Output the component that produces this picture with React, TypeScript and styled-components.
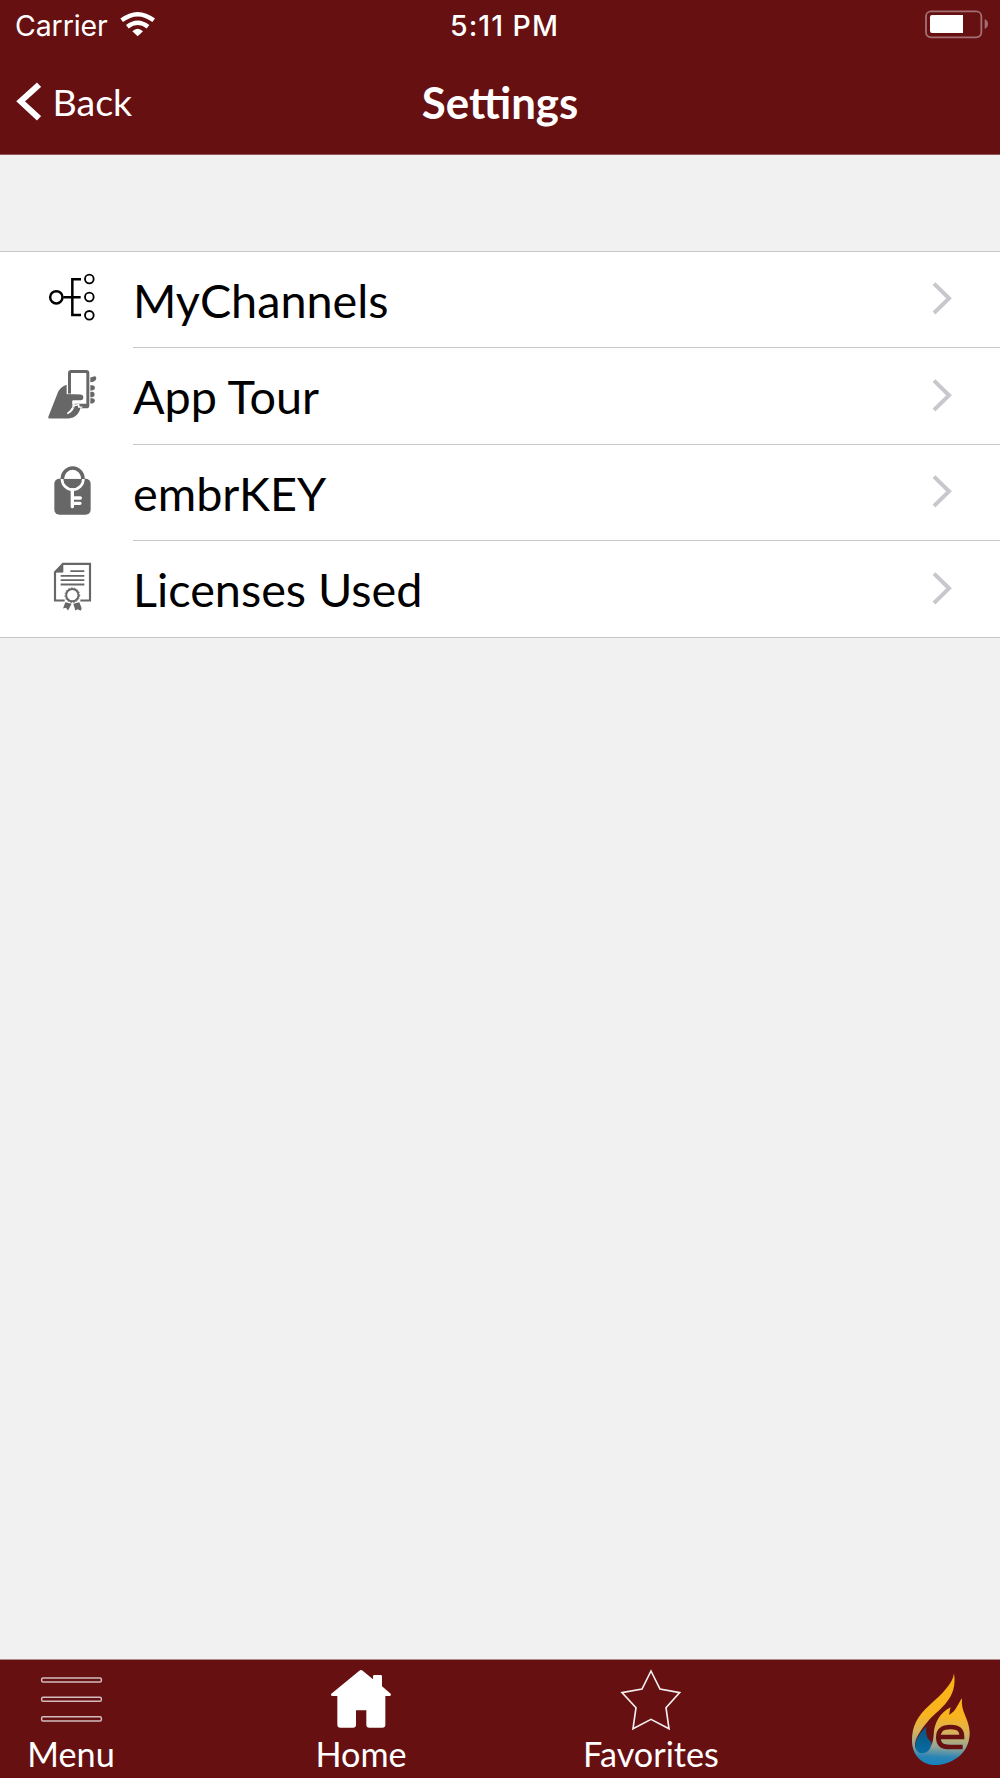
import React from 'react';
import styled, { createGlobalStyle } from 'styled-components';

const maroon = '#661012';
const grey = '#676767';

const GlobalStyle = createGlobalStyle`
  * { box-sizing: border-box; }
  body { margin: 0; background: #f1f1f1; }
`;

const Screen = styled.div`
  width: 1000px;
  height: 1778px;
  display: flex;
  flex-direction: column;
  background: #f1f1f1;
  font-family: Lato, sans-serif;
  color: #000;
  overflow: hidden;
`;

const Header = styled.header`
  height: 155px;
  flex: none;
  background: ${maroon};
  border-bottom: 1px solid #94565a;
  color: #fff;
`;

const StatusBar = styled.div`
  height: 50px;
  display: grid;
  grid-template-columns: 1fr auto 1fr;
  align-items: start;
  padding: 0 12px 0 15px;
  font-family: Inter, sans-serif;
  font-size: 28.5px;
  line-height: 52px;
`;

const Carrier = styled.div`
  display: flex;
  align-items: flex-start;
  gap: 12.5px;
  letter-spacing: -0.1px;
`;

const Clock = styled.time`
  font-weight: 500;
  font-size: 28.5px;
  letter-spacing: 1px;
  padding-left: 6px;
`;

const Battery = styled.svg`
  justify-self: end;
  width: 64px;
  height: 50px;
`;

const Wifi = styled.svg`
  width: 36px;
  height: 50px;
`;

const NavBar = styled.nav`
  height: 104px;
  display: grid;
  grid-template-columns: 1fr auto 1fr;
  padding: 0 16px;
`;

const Back = styled.a`
  display: flex;
  align-items: flex-start;
  gap: 11.5px;
  font-size: 37.6px;
  line-height: 46px;
  padding-top: 29px;
`;

const BackArrow = styled.svg`
  width: 25px;
  height: 40px;
  margin-top: 2px;
`;

const Title = styled.h1`
  margin: 0;
  padding-top: 26px;
  font-size: 43.8px;
  line-height: 52px;
  font-weight: 700;
`;

const List = styled.ul`
  list-style: none;
  margin: 96px 0 0;
  padding: 0;
  flex: none;
  background: #fff;
  border-top: 1px solid #c8c8c8;
  border-bottom: 1px solid #c8c8c8;
`;

const Item = styled.li`
  display: flex;
  align-items: center;
  height: 96px;
  padding-left: 46px;
  &:nth-child(2) { height: 97px; }
`;

const ItemIcon = styled.svg`
  width: 52px;
  height: 52px;
  margin: 0 35px 4px 0;
  flex: none;
`;

const ItemBody = styled.div`
  flex: 1;
  height: 100%;
  display: flex;
  align-items: center;
  justify-content: space-between;
  padding-right: 44px;
  border-bottom: 1px solid #c8c7cc;
  ${Item}:last-child & { border-bottom: 0; }
`;

const ItemLabel = styled.span`
  font-size: 46.75px;
  line-height: 56px;
  white-space: nowrap;
`;

const Chevron = styled.svg`
  width: 24px;
  height: 36px;
  margin-bottom: 3px;
`;

const TabBar = styled.footer`
  height: 119px;
  flex: none;
  margin-top: auto;
  display: flex;
  justify-content: space-between;
  background: ${maroon};
  border-top: 1px solid #b08a8b;
  color: #fff;
`;

const Tabs = styled.div`
  display: flex;
  gap: 150px;
  padding: 6px 0 0 1px;
`;

const Tab = styled.div`
  width: 140px;
  display: flex;
  flex-direction: column;
  align-items: center;
`;

const TabIcon = styled.svg`
  width: 70px;
  height: 66px;
  flex: none;
`;

const TabLabel = styled.span`
  margin-top: 2px;
  font-size: 34.2px;
  line-height: 40px;
`;

const Logo = styled.svg`
  width: 110px;
  height: 118px;
`;

const ChannelsIcon = () => (
  <ItemIcon viewBox="48 66 156 156" fill="none" stroke="#000">
    <circle cx="79" cy="142" r="18.5" strokeWidth="7.5" />
    <path d="M100 142H152M153 88H127V195H153" strokeWidth="7.5" />
    <g strokeWidth="5.5">
      <circle cx="178" cy="87" r="13" />
      <circle cx="178" cy="141" r="13" />
      <circle cx="178" cy="196" r="13" />
    </g>
  </ItemIcon>
);

const TourIcon = () => (
  <ItemIcon viewBox="48 55.5 156 156" fill={grey}>
    <rect x="118.5" y="63" width="55" height="106" rx="5" fill="#fff" stroke={grey} strokeWidth="9" />
    <path d="M134 160H174V168Q174 172 169 172H134Z" />
    <path d="M110 103C95 108 87 117 82 130L55 199Q53 204 58 204H116C136 202 146 191 151 174L147 165L136 164C131 176 126 185 115 190L112 186C119 181 126 174 127 163L126 149H152Q160 149 160 141Q160 132 151 132L134 131H110Z" stroke="#fff" strokeWidth="3" paintOrder="stroke" />
    <path d="M181 81L194 77Q201 78 198 86Q195 94 181 95ZM181 104H187Q195 105 195 112Q195 119 187 120H181ZM181 124H187Q194 125 194 132Q194 139 187 140H181ZM181 143H187Q195 144 195 151Q194 158 187 159H181Z" />
    <path d="M110 130L127 149V163C126 174 119 181 112 187Z" />
    <path d="M112 190L122 181Q129 175 130 166L146 162V170H157M129 152V160" fill="none" stroke="#fff" strokeWidth="4" />
  </ItemIcon>
);

const KeyIcon = () => (
  <ItemIcon viewBox="48 45 156 156">
    <rect x="73" y="86" width="109" height="108" rx="15" fill={grey} />
    <path d="M97 87A31 33 0 0 1 159 87" fill="none" stroke={grey} strokeWidth="11" />
    <path d="M96 87A32 32 0 0 0 160 87" fill="none" stroke="#fff" strokeWidth="8" />
    <path d="M103 86A25 25 0 0 1 153 86Z" fill="#fff" />
    <path d="M127 119V170M127 144H151M127 160H150" fill="none" stroke="#fff" strokeWidth="10" strokeLinecap="round" />
  </ItemIcon>
);

const LicenseIcon = () => (
  <ItemIcon viewBox="48 48.5 156 156" fill="none" stroke={grey}>
    <path d="M104 167H75V82L99 57H180V167H151" strokeWidth="6.5" />
    <path d="M75 82L99 57V82Z" fill={grey} strokeWidth="2" />
    <path d="M121 79H163M92 93H163M92 106H163M92 119H163" strokeWidth="5.5" />
    <circle cx="127" cy="151" r="24" fill="#fff" stroke="none" />
    <circle cx="127" cy="151" r="18.5" strokeWidth="6" />
    <circle cx="127" cy="151" r="22" strokeWidth="3" strokeDasharray="4.5 4.5" />
    <path d="M106 172L99 191L108 189L114 197L125 177ZM148 172L155 190L152 198L143 193L136 197L130 177Z" fill={grey} stroke="none" />
  </ItemIcon>
);

const items = [
  { label: 'MyChannels', Icon: ChannelsIcon },
  { label: 'App Tour', Icon: TourIcon },
  { label: 'embrKEY', Icon: KeyIcon },
  { label: 'Licenses Used', Icon: LicenseIcon },
];

export default function App() {
  return (
    <Screen>
      <GlobalStyle />
      <Header>
        <StatusBar>
          <Carrier>
            Carrier
            <Wifi viewBox="360 0 108 150" fill="none" stroke="#fff">
              <path d="M365 61Q413 24 461 61M382 80Q413 56 444 80" strokeWidth="13" />
              <path d="M397 94Q413 79 429 94L413 109Z" fill="#fff" stroke="none" />
            </Wifi>
          </Carrier>
          <Clock>5:11 PM</Clock>
          <Battery viewBox="72 0 192 150">
            <rect x="78" y="34" width="166" height="78" rx="15" fill="none" stroke="#a36f71" strokeWidth="5.5" />
            <path d="M96 45H189V99H96Q90 99 90 92V52Q90 45 96 45Z" fill="#fff" />
            <path d="M254 57Q264 62 264 72Q264 82 254 87Z" fill="#a36f71" />
          </Battery>
        </StatusBar>
        <NavBar>
          <Back>
            <BackArrow viewBox="48 243 75 120">
              <path d="M117 254L62 304L117 355" fill="none" stroke="#fff" strokeWidth="18" />
            </BackArrow>
            Back
          </Back>
          <Title>Settings</Title>
        </NavBar>
      </Header>
      <List>
        {items.map(({ label, Icon }) => (
          <Item key={label}>
            <Icon />
            <ItemBody>
              <ItemLabel>{label}</ItemLabel>
              <Chevron viewBox="96 120 72 108">
                <path d="M102 131L147 175L102 219" fill="none" stroke="#c7c7cc" strokeWidth="12" />
              </Chevron>
            </ItemBody>
          </Item>
        ))}
      </List>
      <TabBar>
        <Tabs>
          <Tab>
            <TabIcon viewBox="108 48 210 198" fill="none" stroke="#d3bdbe" strokeWidth="4.5">
              <rect x="125" y="84" width="179" height="12" rx="4" />
              <rect x="125" y="142" width="179" height="12" rx="4" />
              <rect x="125" y="200" width="179" height="13" rx="4" />
            </TabIcon>
            <TabLabel>Menu</TabLabel>
          </Tab>
          <Tab>
            <TabIcon viewBox="978 48 210 198" fill="#fff">
              <path d="M1078 62Q1083 58 1088 62L1119 88V79Q1119 75 1123 75H1142Q1146 75 1146 79V109L1172 131Q1175 137 1168 138H1156V224Q1156 233 1147 233H1108Q1099 233 1099 224V181H1068V224Q1068 233 1059 233H1021Q1012 233 1012 224V138H998Q990 137 994 131Z" />
            </TabIcon>
            <TabLabel>Home</TabLabel>
          </Tab>
          <Tab>
            <TabIcon viewBox="168 48 210 198" fill="none" stroke="#f4eeee" strokeWidth="5">
              <path d="M273 63L300 117L359 128L318 173L327 236L273 208L219 236L228 173L186 128L246 117Z" />
            </TabIcon>
            <TabLabel>Favorites</TabLabel>
          </Tab>
        </Tabs>
        <Logo viewBox="0 30 330 354">
          <defs>
            <linearGradient id="flame" gradientUnits="userSpaceOnUse" x1="150" y1="70" x2="135" y2="345">
              <stop offset="0" stopColor="#fcb415" />
              <stop offset="0.46" stopColor="#f9b41e" />
              <stop offset="0.64" stopColor="#d6b25c" />
              <stop offset="0.8" stopColor="#94a597" />
              <stop offset="0.91" stopColor="#2b86b5" />
              <stop offset="1" stopColor="#1681bd" />
            </linearGradient>
            <linearGradient id="drop" x1="0" y1="0" x2="0" y2="1">
              <stop offset="0" stopColor="#07557f" />
              <stop offset="1" stopColor="#086da3" />
            </linearGradient>
          </defs>
          <path fill="url(#flame)" d="M192 70C190 100 153 135 119 165C83 198 65 227 66 275C68 322 103 346 136 345C187 344 240 309 239 248C238 206 211 186 216 145C205 158 199 184 177 195C180 187 178 179 183 172C150 186 132 220 131 254C130 272 126 286 117 295C101 314 80 308 76 292C71 268 92 240 117 210C149 176 204 146 192 70Z" />
          <path fill="url(#drop)" d="M109 229C82 258 75 274 77 293C80 310 99 315 114 303Q123 296 124 276C111 268 106 253 109 229Z" />
          <path d="M148 261H216C216 240 206 231 182 231C155 231 145 241 145 262C145 284 155 291 180 291H218" fill="none" stroke={maroon} strokeWidth="14" />
        </Logo>
      </TabBar>
    </Screen>
  );
}
